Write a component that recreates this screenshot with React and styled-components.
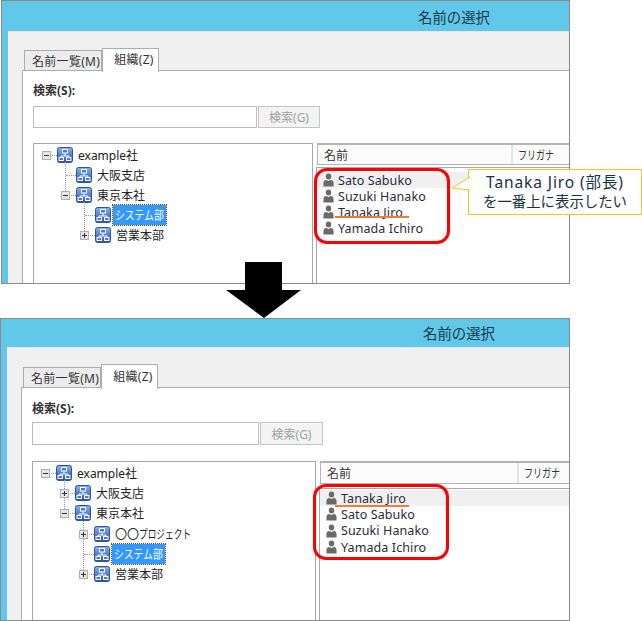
import React from "react";
import styled, { createGlobalStyle, ThemeProvider } from "styled-components";

const FONT = `"Noto Sans", "Noto Sans CJK JP", sans-serif`;

// the lower dialog is the same window shot a little larger
const upper = {
	left: 1, width: 569, height: 284, gap: 0,
	titleH: 30, titleNudge: 0, titlePad: 416, bodyPad: 18, activeTabH: 24, panelLeft: 14, panelPad: 12, labelGap: 7,
	inputW: 224, inputH: 22, buttonW: 62, paneGap: 15, treeW: 280, colW: 195,
	rowH: 20, headH: 22, headGap: 2, listPad: 4, personH: 16
};
const lower = {
	left: 0, width: 570, height: 303, gap: 34,
	titleH: 28, titleNudge: 2, titlePad: 422, bodyPad: 19, activeTabH: 25, panelLeft: 14, panelPad: 13, labelGap: 5,
	inputW: 227, inputH: 23, buttonW: 63, paneGap: 16, treeW: 284, colW: 198,
	rowH: 20.2, headH: 23, headGap: 4, listPad: 1, personH: 16.3
};

const Global = createGlobalStyle`
	html, body {
		margin: 0;
		background: #fff;
		font-family: ${FONT};
		color: #222;
	}
`;
const Page = styled.div`
	position: relative;
	width: 642px;
	height: 621px;
	overflow: hidden;
`;
const Dialog = styled.section`
	position: relative;
	box-sizing: border-box;
	margin-top: ${p => p.theme.gap}px;
	margin-left: ${p => p.theme.left}px;
	width: ${p => p.theme.width}px;
	height: ${p => p.theme.height}px;
`;
const Frame = styled.div`
	box-sizing: border-box;
	height: 100%;
	display: flex;
	flex-direction: column;
	overflow: hidden;
	border: 1px solid #8a8a8a;
	background: #62c8ea;
`;
const TitleBar = styled.div`
	flex: none;
	box-sizing: border-box;
	height: ${p => p.theme.titleH}px;
	display: flex;
	align-items: center;
	padding-left: ${p => p.theme.titlePad}px;
	padding-bottom: ${p => p.theme.titleNudge}px;
	font-size: 14.4px;
	color: #17394a;
`;
const Body = styled.div`
	flex: 1;
	min-height: 0;
	display: flex;
	flex-direction: column;
	margin-left: 6px;
	padding-top: ${p => p.theme.bodyPad}px;
	background: #f0f0f0;
	box-shadow: inset 0 1px 0 #e4e8ea;
`;
const TabStrip = styled.div`
	flex: none;
	display: flex;
	align-items: flex-end;
	padding-left: ${p => p.theme.panelLeft + 2}px;
	height: 22px;
	position: relative;
	z-index: 1;
	margin-bottom: -1px;
`;
const Tab = styled.div`
	box-sizing: border-box;
	height: ${p => (p.$active ? p.theme.activeTabH : 21)}px;
	padding: ${p => (p.$active ? "0 4px 3px 11px" : "0 1px 0 7px")};
	margin-bottom: ${p => (p.$active ? -1 : 0)}px;
	display: flex;
	align-items: center;
	font-size: 12px;
	letter-spacing: 0.3px;
	color: #333;
	background: ${p => (p.$active ? "#fff" : "#ececec")};
	border: 1px solid #adadad;
	border-bottom: ${p => (p.$active ? "none" : "1px solid #adadad")};
`;
const Panel = styled.div`
	flex: 1;
	min-height: 0;
	display: flex;
	flex-direction: column;
	margin-left: ${p => p.theme.panelLeft}px;
	padding: ${p => p.theme.panelPad}px 0 0 10px;
	background: #fff;
	border-top: 1px solid #adadad;
	border-left: 1px solid #adadad;
`;
const SearchLabel = styled.div`
	flex: none;
	font-size: 12px;
	line-height: 16px;
	font-weight: 700;
	color: #333;
	margin-bottom: ${p => p.theme.labelGap}px;
`;
const SearchRow = styled.div`
	flex: none;
	display: flex;
	gap: 1px;
	height: ${p => p.theme.inputH}px;
	margin-bottom: ${p => p.theme.paneGap}px;
`;
const SearchInput = styled.div`
	box-sizing: border-box;
	width: ${p => p.theme.inputW}px;
	border: 1px solid #bdbdbd;
	background: #fff;
`;
const SearchButton = styled.div`
	box-sizing: border-box;
	width: ${p => p.theme.buttonW}px;
	border: 1px solid #c4c4c4;
	background: #f3f3f3;
	display: flex;
	align-items: center;
	justify-content: center;
	font-size: 12px;
	color: #a0a0a0;
`;
const Panes = styled.div`
	flex: 1;
	min-height: 0;
	display: flex;
	gap: 3px;
	margin-bottom: -2px;
`;
const TreePane = styled.div`
	box-sizing: border-box;
	flex: none;
	width: ${p => p.theme.treeW}px;
	padding-top: 1px;
	border: 1px solid #a8a8a8;
`;
const TreeRow = styled.div`
	display: flex;
	align-items: center;
	height: ${p => p.theme.rowH}px;
	padding-left: ${p => 8 + p.$level * 19}px;
`;
const Slot = styled.span`
	position: relative;
	flex: none;
	width: 15px;
	height: 20px;
	&::before {
		content: "";
		position: absolute;
		left: 5px;
		right: 0;
		top: 10px;
		border-top: 1px dotted #999;
		display: ${p => (p.$line ? "block" : "none")};
	}
	&::after {
		content: "";
		position: absolute;
		left: 4px;
		top: -3px;
		height: ${p => (p.$through ? 23 : 13)}px;
		border-left: 1px dotted #999;
		display: ${p => (p.$trunk ? "block" : "none")};
	}
`;
const Expander = styled.span`
	position: absolute;
	z-index: 1;
	left: 0;
	top: 6px;
	box-sizing: border-box;
	width: 9px;
	height: 9px;
	border: 1px solid #b0b0b0;
	background: #e6e6e6;
	&::before {
		content: "";
		position: absolute;
		left: 1px;
		top: 3px;
		width: 5px;
		height: 1px;
		background: #333;
	}
	&::after {
		content: "";
		position: absolute;
		left: 3px;
		top: 1px;
		width: 1px;
		height: 5px;
		background: #333;
		display: ${p => (p.$open ? "none" : "block")};
	}
`;
const NodeLabel = styled.span`
	margin-left: ${p => (p.$selected ? 2 : 4)}px;
	padding: ${p => (p.$selected ? "0 2px" : "0 1px")};
	height: 20px;
	display: flex;
	align-items: center;
	font-size: 12px;
	white-space: nowrap;
	color: ${p => (p.$selected ? "#fff" : "#222")};
	background: ${p => (p.$selected ? "#3399ff" : "transparent")};
	outline: ${p => (p.$selected ? "1px dotted #7a4a10" : "none")};
`;
// the dialog font sets kana much narrower than Noto does
const Condensed = styled.span`
	display: inline-block;
	width: ${p => p.$width}px;
	white-space: nowrap;
	transform-origin: left center;
	transform: scaleX(${p => p.$scale});
`;
const ListPane = styled.div`
	flex: 1;
	min-width: 0;
	display: flex;
	flex-direction: column;
`;
const ColumnHead = styled.div`
	flex: none;
	box-sizing: border-box;
	display: flex;
	height: ${p => p.theme.headH}px;
	margin-left: 1px;
	border: 1px solid #b4b4b4;
	border-width: 2px 0 1px 1px;
	background: #fbfbfb;
	font-size: 12px;
	color: #333;
`;
const ColumnCell = styled.div`
	flex: none;
	box-sizing: border-box;
	display: flex;
	align-items: center;
	white-space: nowrap;
	padding-left: ${p => (p.$narrow ? 5 : 6)}px;
	width: ${p => (p.$narrow ? "auto" : `${p.theme.colW}px`)};
	border-right: ${p => (p.$narrow ? "none" : "2px solid #e4e4e4")};
`;
const People = styled.div`
	flex: 1;
	margin-top: ${p => p.theme.headGap}px;
	padding-top: ${p => p.theme.listPad}px;
	border: 1px solid #a8a8a8;
	border-width: 1px 0 0 1px;
`;
const Person = styled.div`
	display: flex;
	align-items: center;
	gap: 4px;
	height: ${p => p.theme.personH}px;
	padding-left: 6px;
	font-size: 12.5px;
	letter-spacing: 0.1px;
	color: #2b2b3a;
	background: ${p => (p.$hover ? "#f0f0f0" : "transparent")};
`;
const Ring = styled.div`
	position: absolute;
	box-sizing: border-box;
	left: 313px;
	top: ${p => p.$top}px;
	width: 136px;
	height: 76px;
	border: 3px solid #f00;
	border-radius: 13px;
`;
const Underline = styled.div`
	position: absolute;
	left: ${p => p.$left}px;
	top: ${p => p.$top}px;
	width: 74px;
	height: 2px;
	background: #ed7d31;
`;
const Callout = styled.div`
	position: absolute;
	box-sizing: border-box;
	left: 467px;
	top: 169px;
	width: 174px;
	height: 46px;
	display: flex;
	flex-direction: column;
	align-items: center;
	justify-content: center;
	border: 1px solid #fdc12e;
	background: #fff;
	font-size: 14.4px;
	line-height: 20px;
	white-space: nowrap;
	color: #1c3140;
`;
const CalloutHeading = styled.span`
	font-size: 15.5px;
	letter-spacing: 0.9px;
`;
const CalloutTail = styled.svg`
	position: absolute;
	left: -18px;
	top: 5px;
`;
const DownArrow = styled.svg`
	position: absolute;
	z-index: 2;
	left: 226px;
	top: 262px;
`;

const OrgIcon = () => (
	<svg width="16" height="16" viewBox="0 0 16 16" style={{ flex: "none" }}>
		<defs>
			<linearGradient id="org" x1="0" y1="0" x2="0" y2="1">
				<stop offset="0" stopColor="#86b4ea" />
				<stop offset="1" stopColor="#2a4fb0" />
			</linearGradient>
		</defs>
		<rect x="0.5" y="0.5" width="15" height="15" rx="2" fill="url(#org)" stroke="#2f5597" />
		<path d="M8 6v3M4 11V9h8v2" fill="none" stroke="#fff" strokeWidth="1" />
		<rect x="5.5" y="2.5" width="5" height="3.5" fill="#4a78cf" stroke="#fff" />
		<rect x="2" y="10.5" width="4.5" height="3" fill="#4a78cf" stroke="#fff" />
		<rect x="9.5" y="10.5" width="4.5" height="3" fill="#4a78cf" stroke="#fff" />
	</svg>
);

const PersonIcon = () => (
	<svg width="11" height="14" viewBox="0 0 12 14" style={{ flex: "none" }} preserveAspectRatio="none">
		<circle cx="6" cy="3.6" r="3" fill="#6a6a6a" />
		<path d="M0.5 13.5V10c0-2 1.5-3 3-3L6 8l2.5-1c1.5 0 3 1 3 3v3.5z" fill="#6a6a6a" />
	</svg>
);

const Node = ({ level, expander, trunk, through, selected, children }) => (
	<TreeRow $level={level}>
		<Slot $line={level > 0 || expander} $trunk={trunk} $through={through}>
			{expander && <Expander $open={expander === "open"} />}
		</Slot>
		<OrgIcon />
		<NodeLabel $selected={selected}>{children}</NodeLabel>
	</TreeRow>
);

const NameDialog = ({ theme, nodes, people, ring, underline, children }) => (
	<ThemeProvider theme={theme}>
		<Dialog>
			<Frame>
				<TitleBar>名前の選択</TitleBar>
				<Body>
					<TabStrip>
						<Tab>名前一覧(M)</Tab>
						<Tab $active>組織(Z)</Tab>
					</TabStrip>
					<Panel>
						<SearchLabel>検索(S):</SearchLabel>
						<SearchRow>
							<SearchInput />
							<SearchButton>検索(G)</SearchButton>
						</SearchRow>
						<Panes>
							<TreePane>
								{nodes.map(node => (
									<Node key={node.name} {...node}>
										{node.lead}
										{node.squeeze ? (
											<Condensed $width={node.squeeze} $scale={node.squeeze / (node.name.length * 12)}>
												{node.name}
											</Condensed>
										) : (
											node.name
										)}
									</Node>
								))}
							</TreePane>
							<ListPane>
								<ColumnHead>
									<ColumnCell>名前</ColumnCell>
									<ColumnCell $narrow>
										<Condensed $width={36} $scale={0.75}>
											フリガナ
										</Condensed>
									</ColumnCell>
								</ColumnHead>
								<People>
									{people.map((name, i) => (
										<Person key={name} $hover={i === 0}>
											<PersonIcon />
											{name}
										</Person>
									))}
								</People>
							</ListPane>
						</Panes>
					</Panel>
				</Body>
			</Frame>
			<Ring $top={ring} />
			<Underline $left={underline.left} $top={underline.top} />
			{children}
		</Dialog>
	</ThemeProvider>
);

const beforeNodes = [
	{ name: "example社", level: 0, expander: "open" },
	{ name: "大阪支店", level: 1, trunk: true, through: true },
	{ name: "東京本社", level: 1, expander: "open", trunk: true },
	{ name: "システム部", level: 2, trunk: true, through: true, selected: true, squeeze: 49 },
	{ name: "営業本部", level: 2, expander: "closed", trunk: true }
];
const afterNodes = [
	{ name: "example社", level: 0, expander: "open" },
	{ name: "大阪支店", level: 1, expander: "closed", trunk: true, through: true },
	{ name: "東京本社", level: 1, expander: "open", trunk: true },
	{ name: "プロジェクト", lead: "〇〇", level: 2, expander: "closed", trunk: true, through: true, squeeze: 52 },
	{ name: "システム部", level: 2, trunk: true, through: true, selected: true, squeeze: 49 },
	{ name: "営業本部", level: 2, expander: "closed", trunk: true }
];

export default function App() {
	return (
		<Page>
			<Global />
			<NameDialog
				theme={upper}
				nodes={beforeNodes}
				people={["Sato Sabuko", "Suzuki Hanako", "Tanaka Jiro", "Yamada Ichiro"]}
				ring={168}
				underline={{ left: 334, top: 216 }}
			>
				<Callout>
					<CalloutTail width="19" height="18" viewBox="0 0 19 18">
						<path d="M19 2L1 13l18 2" fill="#fff" stroke="#fdc12e" />
					</CalloutTail>
					<CalloutHeading>Tanaka Jiro (部長)</CalloutHeading>
					<span>を一番上に表示したい</span>
				</Callout>
			</NameDialog>
			<NameDialog
				theme={lower}
				nodes={afterNodes}
				people={["Tanaka Jiro", "Sato Sabuko", "Suzuki Hanako", "Yamada Ichiro"]}
				ring={166}
				underline={{ left: 335, top: 187 }}
			/>
			<DownArrow width="75" height="56" viewBox="0 0 75 56">
				<path d="M19 0h37v28h19L38 56 0 28h19z" fill="#000" />
			</DownArrow>
		</Page>
	);
}
